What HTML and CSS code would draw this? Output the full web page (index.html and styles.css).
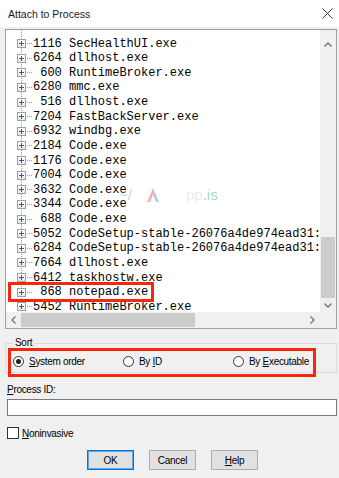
FILE: index.html
```html
<!DOCTYPE html>
<html>
<head>
<meta charset="utf-8">
<title>Attach to Process</title>
<link rel="stylesheet" href="styles.css">
</head>
<body>
<div class="dialog">
  <div class="titlebar">
    <span class="title">Attach to Process</span>
    <svg class="close" width="11" height="11" viewBox="0 0 11 11"><path d="M0.5 0.5 L10.5 10.5 M10.5 0.5 L0.5 10.5" stroke="#333" stroke-width="1" fill="none"/></svg>
  </div>
  <div class="main">
    <div class="listbox">
      <div class="viewport">
        <div class="rows">
          <div class="row"><span class="exp"></span><span class="dash"></span><span class="txt">1116 SecHealthUI.exe</span></div>
          <div class="row"><span class="exp"></span><span class="dash"></span><span class="txt">6264 dllhost.exe</span></div>
          <div class="row"><span class="exp"></span><span class="dash"></span><span class="txt"> 600 RuntimeBroker.exe</span></div>
          <div class="row"><span class="exp"></span><span class="dash"></span><span class="txt">6280 mmc.exe</span></div>
          <div class="row"><span class="exp"></span><span class="dash"></span><span class="txt"> 516 dllhost.exe</span></div>
          <div class="row"><span class="exp"></span><span class="dash"></span><span class="txt">7204 FastBackServer.exe</span></div>
          <div class="row"><span class="exp"></span><span class="dash"></span><span class="txt">6932 windbg.exe</span></div>
          <div class="row"><span class="exp"></span><span class="dash"></span><span class="txt">2184 Code.exe</span></div>
          <div class="row"><span class="exp"></span><span class="dash"></span><span class="txt">1176 Code.exe</span></div>
          <div class="row"><span class="exp"></span><span class="dash"></span><span class="txt">7004 Code.exe</span></div>
          <div class="row"><span class="exp"></span><span class="dash"></span><span class="txt">3632 Code.exe</span></div>
          <div class="row"><span class="exp"></span><span class="dash"></span><span class="txt">3344 Code.exe</span></div>
          <div class="row"><span class="exp"></span><span class="dash"></span><span class="txt"> 688 Code.exe</span></div>
          <div class="row"><span class="exp"></span><span class="dash"></span><span class="txt">5052 CodeSetup-stable-26076a4de974ead31:e7ebc2dc31d0b.tmp</span></div>
          <div class="row"><span class="exp"></span><span class="dash"></span><span class="txt">6284 CodeSetup-stable-26076a4de974ead31:e7ebc2dc31d0b.tmp</span></div>
          <div class="row"><span class="exp"></span><span class="dash"></span><span class="txt">7664 dllhost.exe</span></div>
          <div class="row"><span class="exp"></span><span class="dash"></span><span class="txt">6412 taskhostw.exe</span></div>
          <div class="row"><span class="exp"></span><span class="dash"></span><span class="txt"> 868 notepad.exe</span></div>
          <div class="row"><span class="exp"></span><span class="dash"></span><span class="txt">5452 RuntimeBroker.exe</span></div>
        </div>
      </div>
      <div class="vscroll">
        <div class="sb-btn sb-up"><svg width="8" height="5" viewBox="0 0 8 5"><path d="M0.5 4.5 L4 1 L7.5 4.5" stroke="#707070" stroke-width="1.3" fill="none"/></svg></div>
        <div class="vtrack"><div class="vthumb"></div></div>
        <div class="sb-btn sb-down"><svg width="8" height="5" viewBox="0 0 8 5"><path d="M0.5 0.5 L4 4 L7.5 0.5" stroke="#707070" stroke-width="1.3" fill="none"/></svg></div>
      </div>
      <div class="hscroll">
        <div class="sb-btn sb-left"><svg width="5" height="8" viewBox="0 0 5 8"><path d="M4.5 0.5 L1 4 L4.5 7.5" stroke="#707070" stroke-width="1.3" fill="none"/></svg></div>
        <div class="hthumb"></div>
        <div class="htrack"></div>
        <div class="sb-btn sb-right"><svg width="5" height="8" viewBox="0 0 5 8"><path d="M0.5 0.5 L4 4 L0.5 7.5" stroke="#707070" stroke-width="1.3" fill="none"/></svg></div>
      </div>
      <div class="corner"></div>
      <div class="watermark">
        <span class="wm-green">~/</span>
        <svg class="wm-logo" width="14" height="16" viewBox="0 0 14 16"><path d="M7 1 L1 15 L4 15 L7 8 Z" fill="#f4a0a0"/><path d="M7 1 L13 15 L10 15 L7 8 Z" fill="#9cc0f0"/></svg>
        <span class="wm-gray">pp</span><span class="wm-green wm-is">.is</span>
      </div>
    </div>

    <fieldset class="sort">
      <legend>Sort</legend>
      <div class="radios">
        <label class="radio"><span class="circle checked"></span><span><u>S</u>ystem order</span></label>
        <label class="radio"><span class="circle"></span><span>By <u>I</u>D</span></label>
        <label class="radio"><span class="circle"></span><span>By <u>E</u>xecutable</span></label>
      </div>
    </fieldset>

    <div class="field-label"><u>P</u>rocess ID:</div>
    <div class="textbox"></div>

    <label class="check"><span class="box"></span><span><u>N</u>oninvasive</span></label>

    <div class="buttons">
      <div class="btn default">OK</div>
      <div class="btn">Cancel</div>
      <div class="btn"><u>H</u>elp</div>
    </div>
  </div>

  <div class="mark mark-row"></div>
  <div class="mark mark-sort"></div>
</div>
</body>
</html>
```

FILE: styles.css
```css
html, body {
  margin: 0;
  padding: 0;
}
body {
  width: 339px;
  height: 478px;
  overflow: hidden;
  background: #f0f0f0;
  font-family: "Liberation Sans", Arial, sans-serif;
  color: #000;
}
.dialog {
  position: relative;
  width: 339px;
  height: 478px;
}
.titlebar {
  height: 27px;
  background: #fff;
  display: flex;
  align-items: center;
  justify-content: space-between;
  padding: 0 6px 0 8px;
  box-sizing: border-box;
}
.title {
  font-size: 10.5px;
  color: #1a1a1a;
}
.close {
  display: block;
  margin-top: -1px;
}
.main {
  padding: 2px 2px 0 5px;
}

/* list box */
.listbox {
  position: relative;
  height: 300px;
  box-sizing: border-box;
  border: 1px solid #a0a0a0;
  background: #fff;
  display: grid;
  grid-template-columns: 1fr 16px;
  grid-template-rows: 1fr 16px;
}
.viewport {
  overflow: hidden;
}
.rows {
  padding-top: 6.2px;
  min-height: 100%;
  box-sizing: border-box;
  background-image: repeating-linear-gradient(to bottom, #9a9a9a 0 1px, transparent 1px 2px);
  background-size: 1px 100%;
  background-position: 15px 0;
  background-repeat: no-repeat;
}
.row {
  height: 14.64px;
  display: flex;
  align-items: center;
  padding-left: 11px;
  white-space: pre;
}
.exp {
  position: relative;
  flex: none;
  width: 9px;
  height: 9px;
  box-sizing: border-box;
  border: 1px solid #9aa0a8;
  background: linear-gradient(#ffffff, #e4e8ee);
}
.exp::before,
.exp::after {
  content: "";
  position: absolute;
  background: #3a5a8c;
}
.exp::before {
  left: 1px;
  top: 3px;
  width: 5px;
  height: 1px;
}
.exp::after {
  left: 3px;
  top: 1px;
  width: 1px;
  height: 5px;
}
.dash {
  flex: none;
  width: 5px;
  height: 1px;
  background-image: repeating-linear-gradient(to right, #9a9a9a 0 1px, transparent 1px 2px);
  margin-left: 1px;
}
.txt {
  margin-left: 1px;
  font-family: "Liberation Mono", "Courier New", monospace;
  font-size: 12px;
  color: #000;
}

/* scrollbars */
.vscroll {
  background: #f0f0f0;
  display: flex;
  flex-direction: column;
}
.sb-btn {
  display: flex;
  align-items: center;
  justify-content: center;
  flex: none;
}
.sb-btn svg {
  display: block;
}
.sb-up {
  height: 28px;
}
.sb-down {
  height: 14px;
}
.vtrack {
  flex: 1;
  display: flex;
  flex-direction: column;
  justify-content: flex-end;
}
.vthumb {
  height: 61px;
  margin: 0 1px;
  background: #cdcdcd;
}
.hscroll {
  background: #f0f0f0;
  display: flex;
  align-items: stretch;
}
.sb-left {
  width: 15px;
}
.hthumb {
  width: 174px;
  margin: 1px 0;
  background: #cdcdcd;
}
.htrack {
  flex: 1;
}
.sb-right {
  width: 16px;
}
.corner {
  background: #f0f0f0;
}

/* watermark */
.watermark {
  position: absolute;
  left: 113px;
  top: 156px;
  display: flex;
  align-items: center;
  gap: 4px;
  font-family: "Liberation Sans", Arial, sans-serif;
  font-size: 15px;
  pointer-events: none;
}
.wm-green {
  color: rgba(80, 190, 130, 0.45);
}
.wm-logo {
  margin: 0 16px 0 10px;
  opacity: 0.8;
}
.wm-gray {
  color: rgba(200, 200, 200, 0.35);
  margin-left: 6px;
}
.wm-is {
  margin-left: -4px;
  color: rgba(80, 190, 130, 0.55);
}

/* sort group */
.sort {
  margin: 8px 0 0 0;
  padding: 5px 7px 4px 7px;
  border: 1px solid #dcdcdc;
  min-width: 0;
}
.sort legend {
  padding: 0 2px;
  font-size: 10px;
  line-height: 12px;
  letter-spacing: -0.3px;
}
.radios {
  display: grid;
  grid-template-columns: 110px 110px 1fr;
  height: 14px;
}
.radio {
  display: flex;
  align-items: center;
  font-size: 10px;
  letter-spacing: -0.3px;
}
.circle {
  position: relative;
  flex: none;
  width: 11px;
  height: 11px;
  box-sizing: border-box;
  border: 1px solid #333;
  border-radius: 50%;
  background: #fff;
  margin-right: 5px;
}
.circle.checked::after {
  content: "";
  position: absolute;
  left: 2px;
  top: 2px;
  width: 5px;
  height: 5px;
  border-radius: 50%;
  background: #222;
}

/* process id */
.field-label {
  margin: 11px 0 0 2px;
  font-size: 10px;
  line-height: 12px;
  letter-spacing: -0.3px;
}
.textbox {
  margin: 3px 0 0 2px;
  height: 17px;
  box-sizing: border-box;
  border: 1px solid #7a7a7a;
  background: #fff;
}

/* checkbox */
.check {
  display: flex;
  align-items: center;
  margin: 11px 0 0 2px;
  height: 12px;
  font-size: 10px;
  letter-spacing: -0.3px;
}
.box {
  flex: none;
  width: 12px;
  height: 12px;
  box-sizing: border-box;
  border: 1px solid #333;
  background: #fff;
  margin-right: 3px;
}

/* buttons */
.buttons {
  display: flex;
  gap: 15px;
  margin-top: 11px;
  padding-left: 82px;
}
.btn {
  width: 47px;
  height: 20px;
  box-sizing: border-box;
  border: 1px solid #adadad;
  background: #e1e1e1;
  display: flex;
  align-items: center;
  justify-content: center;
  font-size: 10px;
  letter-spacing: -0.3px;
}
.btn.default {
  border: 1px solid #0078d7;
  box-shadow: inset 0 0 0 1px #5fa5e8;
}

/* red annotation boxes drawn over the dialog */
.mark {
  position: absolute;
  box-sizing: border-box;
  border: 3px solid #f8270b;
  pointer-events: none;
}
.mark-row {
  left: 8px;
  top: 282px;
  width: 146px;
  height: 20px;
}
.mark-sort {
  left: 8px;
  top: 348px;
  width: 308px;
  height: 29px;
}
```
